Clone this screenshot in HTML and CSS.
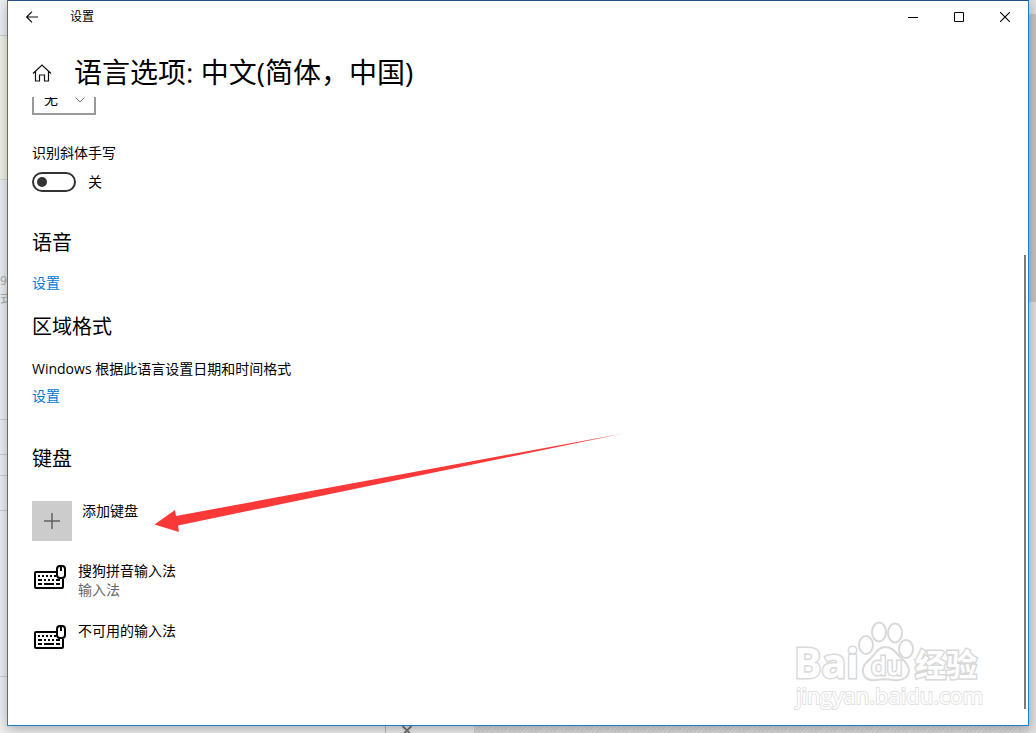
FILE: index.html
```html
<!DOCTYPE html>
<html lang="zh-CN">
<head>
<meta charset="utf-8">
<title>设置</title>
<link rel="stylesheet" href="styles.css">
</head>
<body>
<div class="desktop">
  <div class="backdrop-left">
    <div class="strip strip-top"></div>
    <div class="strip strip-note"></div>
    <div class="strip strip-text"><span>9画</span><span>式</span></div>
    <div class="strip strip-row"></div>
    <div class="strip strip-gap"></div>
    <div class="strip strip-row"></div>
    <div class="strip strip-long"></div>
    <div class="strip-rest"></div>
  </div>

  <div class="window">
    <header class="titlebar">
      <button class="back" type="button" aria-label="返回">
        <svg width="12" height="12" viewBox="0 0 12 12"><path d="M12 6H1M6 .7.7 6 6 11.300" fill="none" stroke="#111" stroke-width="1.200"/></svg>
      </button>
      <span class="app-name">设置</span>
      <button class="caption" type="button" aria-label="最小化">
        <svg width="10" height="10" viewBox="0 0 10 10"><path d="M0 5.500H10" stroke="#000"/></svg>
      </button>
      <button class="caption" type="button" aria-label="最大化">
        <svg width="10" height="10" viewBox="0 0 10 10"><path d="M.5.5h9v9h-9z" fill="none" stroke="#000"/></svg>
      </button>
      <button class="caption" type="button" aria-label="关闭">
        <svg width="10" height="10" viewBox="0 0 10 10"><path d="M0 0 10 10M10 0 0 10" stroke="#000" stroke-width="1.100"/></svg>
      </button>
    </header>

    <div class="page-head">
      <button class="home" type="button" aria-label="主页">
        <svg width="20" height="18" viewBox="0 0 20 18"><path d="M1 9.500 10 1l9 8.500M3.500 7.500v9.500h4v-6h5v6h4V7.500" fill="none" stroke="#111" stroke-width="1.200"/></svg>
      </button>
      <h1>语言选项: 中文(简体，中国)</h1>
    </div>

    <div class="body">
      <main class="content">
        <div class="combo">
          <select aria-label="手写样式"><option>无</option></select>
          <svg class="chevron" width="10" height="6" viewBox="0 0 10 6"><path d="M.5.500 5 5 9.500.500" fill="none" stroke="#777"/></svg>
        </div>

        <label class="field-label" for="italic">识别斜体手写</label>
        <div class="toggle-row">
          <input class="toggle" id="italic" type="checkbox" role="switch">
          <span>关</span>
        </div>

        <h2 class="speech">语音</h2>
        <a class="speech-link" href="#speech">设置</a>

        <h2 class="region">区域格式</h2>
        <p>Windows 根据此语言设置日期和时间格式</p>
        <a class="region-link" href="#region">设置</a>

        <h2 class="keyboards">键盘</h2>
        <button class="add" type="button">
          <span class="add-tile"><svg width="16" height="16" viewBox="0 0 16 16"><path d="M0 8h16M8 0v16" stroke="#333" stroke-opacity=".7" stroke-width="1.500"/></svg></span>
          <span>添加键盘</span>
        </button>

        <ul class="keyboard-list">
          <li>
            <svg width="32" height="26" viewBox="0 0 32 26"><use href="#keyboard"/></svg>
            <div><div>搜狗拼音输入法</div><div class="sub">输入法</div></div>
          </li>
          <li>
            <svg width="32" height="26" viewBox="0 0 32 26">
              <g id="keyboard" fill="none" stroke="#000">
                <path d="M22 7H2Q1 7 1 8v14q0 1 1 1h26q1 0 1-1v-8" stroke-width="2"/>
                <path d="M4 11h2m2 0h2m2 0h2m2 0h2m2 0h2M4 15h4m2 0h2m2 0h2m2 0h2m2 0h4M4 19h4m2 0h10m2 0h4" stroke-width="2"/>
                <rect x="23" y="1" width="8" height="12" rx="3" fill="#fff" stroke-width="2"/>
                <path d="M27 1v5" stroke-width="2"/>
              </g>
            </svg>
            <div><div>不可用的输入法</div></div>
          </li>
        </ul>
      </main>
      <div class="scroll-thumb"></div>

      <svg class="arrow" width="470" height="100" viewBox="0 0 470 100" aria-hidden="true">
        <path d="M.5 91.500 21 77l1 6L469 .500 24 92.500l1 6.500z" fill="#fc3939"/>
      </svg>

      <svg class="watermark" width="192" height="96" viewBox="0 0 192 96" aria-hidden="true">
        <g class="mark">
          <text x="0" y="58" class="mark-bai">Bai</text>
          <ellipse cx="72" cy="25" rx="7" ry="9"/>
          <ellipse cx="85" cy="12" rx="7" ry="9.500"/>
          <ellipse cx="101" cy="13" rx="7" ry="9.500"/>
          <ellipse cx="112" cy="29" rx="7" ry="9"/>
          <path d="M91 27c-7 0-9 6-13 10-5 5-10 8-9 15 1 7 7 9 13 8 6-1 12-1 18 0 8 1 14-2 15-9 0-6-4-10-9-14-4-4-7-10-15-10z"/>
          <text x="77" y="55" class="mark-du">du</text>
          <text x="121" y="56" class="mark-cn">经验</text>
          <text x="2" y="84" class="mark-url">jingyan.baidu.com</text>
        </g>
      </svg>
    </div>
  </div>

  <div class="backdrop-right"><div class="right-top"></div><div class="right-thumb"></div></div>
  <div class="backdrop-bottom">
    <div class="tab-edge"></div>
    <svg class="tab-close" width="10" height="7" viewBox="0 0 10 7"><path d="M.5 0 9.500 9M9.500 0 .5 9" stroke="#777" stroke-width="2"/></svg>
    <div class="hatch"></div>
  </div>
</div>
</body>
</html>
```
FILE: styles.css
```css
* { box-sizing: border-box; }

body {
  margin: 0;
  font: 14px/20px "Open Sans", "Noto Sans CJK SC", sans-serif;
  color: #000;
}

button {
  padding: 0;
  border: 0;
  background: none;
  font: inherit;
  color: inherit;
}

svg { display: block; flex: none; }
h1, h2, p, ul { margin: 0; padding: 0; font-weight: 400; }

.desktop {
  display: grid;
  grid-template: minmax(0, 1fr) 7px / 7px minmax(0, 1fr) 7px;
  height: 100vh;
  overflow: hidden;
  background: #f0f0f0;
}

/* Slices of the pages behind the window */
.backdrop-left {
  grid-area: 1 / 1;
  display: flex;
  flex-direction: column;
  overflow: hidden;
  font-size: 12px;
  line-height: 18px;
  color: #aaa;
  white-space: nowrap;
}
.strip { flex: none; border-bottom: 1px solid #ccc; }
.strip-top { height: 36px; }
.strip-note { height: 144px; background: #f3f2e5; border-color: #dddccb; }
.strip-text { height: 240px; padding-top: 92px; }
.strip-text span { display: block; }
.strip-row { height: 35px; }
.strip-gap { height: 21px; }
.strip-long { height: 166px; }
.strip-rest { flex: 1; }

.backdrop-right {
  grid-area: 1 / 3 / 3 / 4;
  background: #e0e0e0;
}
.right-top { height: 14px; }
.right-thumb { height: 288px; background: #c4c4c4; }

.backdrop-bottom {
  grid-area: 2 / 1 / 3 / 3;
  display: flex;
  overflow: hidden;
}
.tab-edge { width: 386px; border-right: 1px solid #bbb; }
.tab-close { margin: 0 62px 0 16px; }
.hatch {
  flex: 1;
  background: repeating-linear-gradient(135deg, #d8d8d8 0 2px, #e2e2e2 2px 3px);
}

.window {
  grid-area: 1 / 2;
  position: relative;
  z-index: 1;
  display: flex;
  flex-direction: column;
  min-height: 0;
  background: #fff;
  border: 1px solid #1c80cc;
  border-top-color: #205080;
  box-shadow: 0 3px 12px rgba(0, 0, 0, .3);
}

.titlebar { display: flex; align-items: center; height: 32px; flex: none; }
.back { display: grid; place-items: center; width: 48px; height: 32px; }
.app-name { flex: 1; padding-left: 14px; font-size: 12px; }
.caption { display: grid; place-items: center; width: 46px; height: 32px; }

.page-head {
  display: flex;
  align-items: center;
  gap: 22px;
  flex: none;
  height: 64px;
  padding: 14px 24px 0;
}
.home { padding-top: 2px; }
h1 { font-size: 28px; line-height: 40px; }

.body { position: relative; display: flex; flex: 1; min-height: 0; overflow: hidden; }
.content { flex: 1; padding: 0 24px; }

/* The form is scrolled, so the first control is cut by the header */
.combo { position: relative; width: 64px; margin-top: -14px; }
.combo select {
  appearance: none;
  display: block;
  width: 100%;
  height: 32px;
  padding: 0 10px;
  border: 2px solid #999;
  border-radius: 0;
  background: #fff;
  font: inherit;
  color: inherit;
}
.chevron { position: absolute; right: 11px; top: 14px; pointer-events: none; }

.field-label { display: block; margin-top: 28px; }
.toggle-row { display: flex; align-items: center; gap: 12px; margin-top: 9px; }
.toggle {
  appearance: none;
  display: flex;
  align-items: center;
  width: 44px;
  height: 20px;
  margin: 0;
  padding: 0 3px;
  border: 2px solid #333;
  border-radius: 10px;
}
.toggle::before { content: ""; width: 10px; height: 10px; border-radius: 50%; background: #333; }

h2 { font-size: 20px; line-height: 28px; }
a { display: table; color: #0078d7; text-decoration: none; }
.speech { margin-top: 37px; }
.speech-link { margin-top: 16px; }
.region { margin-top: 20px; }
p { margin-top: 18px; }
.region-link { margin-top: 7px; }
.keyboards { margin-top: 39px; }

.add { display: flex; align-items: flex-start; gap: 10px; margin-top: 28px; }
.add-tile { display: grid; place-items: center; width: 40px; height: 40px; background: #ccc; }

.keyboard-list { list-style: none; margin-top: 20px; }
.keyboard-list li { display: flex; gap: 12px; min-height: 60px; padding-left: 2px; }
.keyboard-list svg { margin-top: 4px; }
.sub { line-height: 18px; color: #666; }

.scroll-thumb { width: 2px; margin: 158px 2px 16px 0; background: #7a7a7a; }

.arrow { position: absolute; left: 146px; top: 336px; pointer-events: none; }

.watermark { position: absolute; right: 42px; bottom: 9px; pointer-events: none; }
.mark { fill: #fff; stroke: #d9d9d9; stroke-width: 2px; }
.mark text { paint-order: stroke; stroke-width: 3px; }
.mark-bai { font: 700 41px "Open Sans", sans-serif; }
.mark-du { font: 600 25px "Open Sans", sans-serif; }
.mark-cn { font: 700 31px "Noto Sans CJK SC", sans-serif; }
.mark .mark-url { font: 400 22px "Open Sans", sans-serif; stroke: #e2e2e2; stroke-width: 2px; }
```
